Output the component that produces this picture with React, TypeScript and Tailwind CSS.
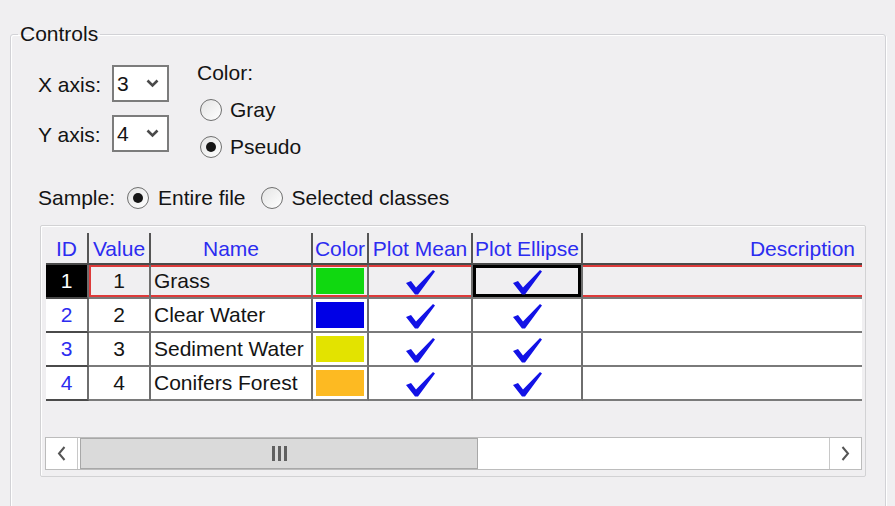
const rows = [
  { id: 1, value: 1, name: "Grass", color: "bg-[#10d810]" },
  { id: 2, value: 2, name: "Clear Water", color: "bg-[#0000e6]" },
  { id: 3, value: 3, name: "Sediment Water", color: "bg-[#e3e300]" },
  { id: 4, value: 4, name: "Conifers Forest", color: "bg-[#fdba22]" },
];

function Check() {
  return (
    <svg width="29" height="25" viewBox="0 0 29 25" className="mt-[3px]">
      <path d="M0 13 L5 11 L10 17.5 L27 0 L29 1.5 L12 24.5 L9 24.5 Z" fill="#1212e6" />
    </svg>
  );
}

function Chevron() {
  return (
    <svg width="13" height="9" viewBox="0 0 13 9" className="ml-auto mr-[8px]">
      <path d="M1.5 1.5 L6.5 6.5 L11.5 1.5" fill="none" stroke="#4a4a4a" strokeWidth="2.6" />
    </svg>
  );
}

function Combo({ value }: { value: string }) {
  return (
    <div className="w-[57px] h-[37px] border-2 border-[#7c7c7c] bg-white flex items-center pl-[3px]">
      <span>{value}</span>
      <Chevron />
    </div>
  );
}

function Radio({ checked }: { checked?: boolean }) {
  return (
    <span className="w-[22px] h-[22px] rounded-full border-[1.5px] border-[#6f6f6f] bg-gradient-to-br from-[#e4e4e4] to-white flex items-center justify-center shrink-0">
      {checked && <span className="w-[10px] h-[10px] rounded-full bg-[#151515]" />}
    </span>
  );
}

const head = "h-[32px] flex items-center justify-center text-[#2c2cf0] border-b-2 border-b-[#4a4a4a] pt-[2px]";
const sep = "border-r-2 border-r-[#555]";

export default function App() {
  return (
    <div
      className="w-[895px] h-[506px] bg-[#f0eff1] overflow-hidden pt-[23px] pl-[10px] pr-[9px] text-[21px] text-[#141414]"
      style={{ fontFamily: '"Liberation Sans", Arial, sans-serif' }}
    >
      <fieldset className="h-[500px] border border-[#d2d2d6] rounded-[3px] shadow-[inset_1px_1px_0_#fff,1px_1px_0_#fff] p-0 m-0">
        <legend className="ml-[7px] px-[2px] leading-[22px]">Controls</legend>

        <div className="flex pl-[27px]">
          <div className="flex flex-col gap-[13px] mt-[20px]">
            <div className="flex items-center h-[37px]">
              <span className="w-[74px] pt-[2px]">X axis:</span>
              <Combo value="3" />
            </div>
            <div className="flex items-center h-[37px]">
              <span className="w-[74px] pt-[2px]">Y axis:</span>
              <Combo value="4" />
            </div>
          </div>
          <div className="flex flex-col mt-[9px] ml-[28px]">
            <div className="h-[37px] flex items-center">Color:</div>
            <div className="h-[37px] flex items-center gap-[8px] pl-[3px]">
              <Radio />
              <span>Gray</span>
            </div>
            <div className="h-[37px] flex items-center gap-[8px] pl-[3px]">
              <Radio checked />
              <span>Pseudo</span>
            </div>
          </div>
        </div>

        <div className="flex items-center h-[30px] mt-[18px] pl-[27px]">
          <span className="w-[89px]">Sample:</span>
          <Radio checked />
          <span className="ml-[9px]">Entire file</span>
          <span className="ml-[15px]"><Radio /></span>
          <span className="ml-[9px]">Selected classes</span>
        </div>

        <div className="ml-[29px] mt-[12px] w-[826px] h-[252px] border border-[#d2d2d4] rounded-[2px] shadow-[inset_1px_1px_0_#fff] pt-[7px] pl-[5px]">
          <div className="grid grid-cols-[43px_62px_162px_56px_104px_110px_279px]">
            <div className={`${head} ${sep}`}>ID</div>
            <div className={`${head} ${sep}`}>Value</div>
            <div className={`${head} ${sep}`}>Name</div>
            <div className={`${head} ${sep}`}>Color</div>
            <div className={`${head} ${sep} whitespace-nowrap`}>Plot Mean</div>
            <div className={`${head} ${sep} whitespace-nowrap`}>Plot Ellipse</div>
            <div className={`${head} justify-end pr-[7px]`}>Description</div>

            {rows.map((r) => {
              const sel = r.id === 1;
              const bg = sel ? "bg-[#f0eff1]" : "bg-white";
              const red = sel ? "shadow-[inset_0_2px_0_#dd3a3a,inset_0_-2px_0_#dd3a3a]" : "";
              const base = `h-[34px] flex items-center border-b-2 border-b-[#7a7a7a] ${bg}`;
              const cell = `${base} ${red}`;
              const vline = "border-r-2 border-r-[#6e6e6e]";
              return [
                <div
                  key={`id${r.id}`}
                  className={`h-[34px] flex items-center justify-center border-b-2 border-b-[#4a4a4a] ${vline} ${
                    sel ? "bg-black text-white" : "bg-white text-[#2c2cf0]"
                  }`}
                >
                  {r.id}
                </div>,
                <div
                  key={`v${r.id}`}
                  className={`${base} ${vline} justify-center ${
                    sel ? "shadow-[inset_0_2px_0_#dd3a3a,inset_0_-2px_0_#dd3a3a,inset_2px_0_0_#dd3a3a]" : ""
                  }`}
                >
                  {r.value}
                </div>,
                <div key={`n${r.id}`} className={`${cell} ${vline} pl-[3px] whitespace-nowrap`}>
                  {r.name}
                </div>,
                <div key={`c${r.id}`} className={`${cell} ${vline} justify-center`}>
                  <div className={`w-[48px] h-[26px] ${r.color}`} />
                </div>,
                <div key={`m${r.id}`} className={`${cell} ${vline} justify-center`}>
                  <Check />
                </div>,
                <div
                  key={`e${r.id}`}
                  className={`${base} ${vline} justify-center ${
                    sel ? "shadow-[inset_0_0_0_3px_#000]" : ""
                  }`}
                >
                  <Check />
                </div>,
                <div key={`d${r.id}`} className={cell} />,
              ];
            })}
          </div>

          <div className="-ml-px mt-[36px] w-[817px] h-[33px] border border-[#bcbcbc] bg-white flex">
            <div className="w-[32px] h-full flex items-center justify-center border-r border-r-[#c8c8c8]">
              <svg width="9" height="15" viewBox="0 0 9 15">
                <path d="M7.5 1 L2 7.5 L7.5 14" fill="none" stroke="#555" strokeWidth="2" />
              </svg>
            </div>
            <div className="ml-[2px] w-[398px] h-full bg-[#dadada] border border-[#a8a8a8] flex items-center justify-center">
              <div className="flex gap-[3px]">
                <span className="w-[3px] h-[15px] bg-[#606060]" />
                <span className="w-[3px] h-[15px] bg-[#606060]" />
                <span className="w-[3px] h-[15px] bg-[#606060]" />
              </div>
            </div>
            <div className="flex-1" />
            <div className="w-[32px] h-full flex items-center justify-center border-l border-l-[#c8c8c8]">
              <svg width="9" height="15" viewBox="0 0 9 15">
                <path d="M1.5 1 L7 7.5 L1.5 14" fill="none" stroke="#555" strokeWidth="2" />
              </svg>
            </div>
          </div>
        </div>
      </fieldset>
    </div>
  );
}
